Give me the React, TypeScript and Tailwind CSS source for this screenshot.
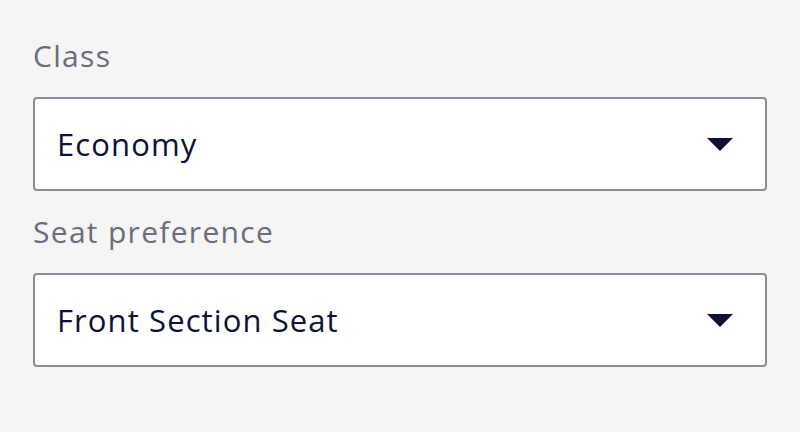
export default function App() {
  const fields = [
    { label: 'Class', value: 'Economy' },
    { label: 'Seat preference', value: 'Front Section Seat' },
  ];

  return (
    <div className="w-[800px] h-[432px] bg-[#f5f5f5] px-[33px] pt-[36px] font-['Open_Sans',sans-serif]">
      <div className="flex flex-col gap-[21px]">
        {fields.map((field) => (
          <div key={field.label} className="flex flex-col">
            <label className="text-[30px] leading-[40px] tracking-[1.3px] text-[#6b6d78] mb-[21px]">{field.label}</label>
            <div className="h-[94px] bg-white border-2 border-[#8b8c98] rounded-[4px] flex items-center justify-between pl-[22px] pr-[32px]">
              <span className="text-[31px] tracking-[1.1px] text-[#0b1236]">{field.value}</span>
              <svg width="26" height="13" viewBox="0 0 26 13">
                <path d="M0 0H26L13 13Z" fill="#0b1236" />
              </svg>
            </div>
          </div>
        ))}
      </div>
    </div>
  );
}
